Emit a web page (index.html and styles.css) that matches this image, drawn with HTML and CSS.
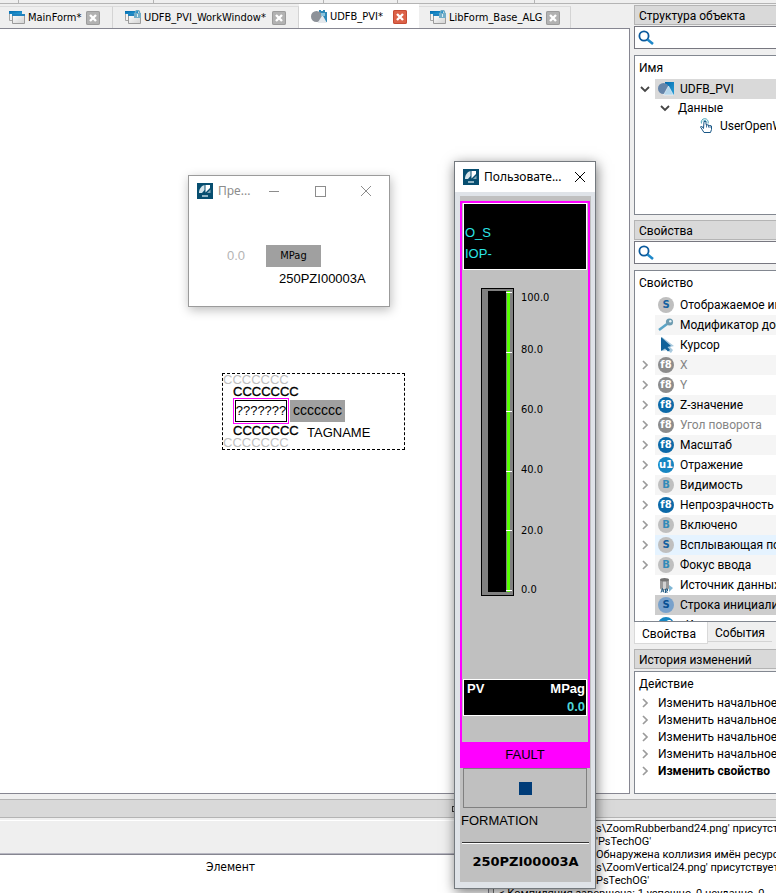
FILE: index.html
```html
<!DOCTYPE html>
<html lang="ru">
<head>
<meta charset="utf-8">
<meta name="viewport" content="width=device-width, initial-scale=1">
<title>UDFB_PVI</title>
<link rel="stylesheet" href="styles.css">
</head>
<body>
<svg class="defs" aria-hidden="true">
  <defs>
    <linearGradient id="blue" x1="0" y1="0" x2="1" y2="1"><stop offset="0" stop-color="#0068ad"/><stop offset="1" stop-color="#2a9fd6"/></linearGradient>
    <linearGradient id="paper" x1="0" y1="0" x2="1" y2="1"><stop offset="0" stop-color="#ffffff"/><stop offset="1" stop-color="#d2d2d2"/></linearGradient>
    <symbol id="form" viewBox="0 0 16 16"><path d="M.5 1.500h12v9H.5z" fill="#f4f4f4" stroke="#a5a5a5"/><path d="M0 1h13v3H0z" fill="url(#blue)"/><path d="M3.500 4.500h12v9h-12z" fill="url(#paper)" stroke="#9b9b9b"/><path d="M3 4h13v2H3z" fill="#2182bd"/></symbol>
    <symbol id="formlock" viewBox="0 0 16 16"><use href="#form"/><path d="M10.500 4V2.500a2 2 0 0 1 4 0V4" fill="none" stroke="#68a8c5" stroke-width="1.500"/><path d="M9 3h7v5H9z" fill="#72adc8"/><path d="M12 4h1v3h-1z" fill="#d9edf5"/></symbol>
    <symbol id="shapes" viewBox="0 0 16 16"><path d="M7 1h9v13H7z" fill="url(#blue)"/><circle cx="5.500" cy="7.500" r="5.500" fill="#6485aa"/><path d="M10.500 5l5 9h-10z" fill="#b3d6ec" stroke="#fff" stroke-width=".5"/></symbol>
    <symbol id="shapeslock" viewBox="0 0 16 16"><path d="M8 1h2v1h2V1h2v2h2v10h-3L8 10z" fill="#2b87b7"/><circle cx="5.500" cy="7.500" r="5.500" fill="#8d9299"/><path d="M11.500 6l4.500 8H6.500z" fill="#e5e9ed"/><path d="M10 4h4v3h-4z" fill="#8ac3dc"/></symbol>
    <symbol id="close" viewBox="0 0 14 14"><path d="M4 4l6 6M10 4l-6 6" stroke="#fff" stroke-width="2.400"/></symbol>
    <symbol id="search" viewBox="0 0 16 16"><circle cx="6" cy="6" r="4.600" fill="none" stroke="#0b5a9d" stroke-width="1.800"/><path d="M9.500 9.500l5.500 4.500" stroke="#1e88c9" stroke-width="2.600"/></symbol>
    <symbol id="down" viewBox="0 0 10 10"><path d="M1 3l4 4 4-4" fill="none" stroke="#454545" stroke-width="1.800"/></symbol>
    <symbol id="right" viewBox="0 0 10 10"><path d="M3 1l4 4-4 4" fill="none" stroke="#9b9b9b" stroke-width="1.700"/></symbol>
    <symbol id="hand" viewBox="0 0 16 16"><path d="M5.500 10.500L3.500 8 2.500 9l3.500 5.500h6.500l1-3V8l-1.500-.5-.5 0-1.500-.5-2-.5v-3h-2z" fill="#fff" stroke="#195786"/><path d="M8.500 6.500v3M10.500 7v2.500M12 7.500v2.500" stroke="#195786" stroke-width=".8"/><path d="M3.500 5.500a3.500 3.500 0 1 1 6.500 0M5 3.500a2 2 0 0 1 3.500 0" fill="none" stroke="#43a2b9"/></symbol>
    <symbol id="key" viewBox="0 0 16 16"><path d="M1 13l8-6" stroke="#5ba5c7" stroke-width="2.600"/><circle cx="11.500" cy="5" r="3.600" fill="#6e9cb1"/><circle cx="12.300" cy="4.200" r="1.200" fill="#e7f2f6"/></symbol>
    <symbol id="cursor" viewBox="0 0 16 16"><path d="M4 0l12 9-4 1 3 3-2 3-4-3-5 1z" fill="#a9c9dd"/><path d="M3 0l10 9-3.500 1 2.500 3-2 1.500-3-3-4 2.500z" fill="#10629a"/></symbol>
    <symbol id="source" viewBox="0 0 16 16"><path d="M2 3v8c0 3 9 3 9 0V3" fill="#9a9a9a"/><path d="M5 4h3v8H5z" fill="#d2d2d2"/><ellipse cx="6.500" cy="2.800" rx="4.500" ry="1.800" fill="#747474"/><path d="M11 8l4 3-4 4z" fill="#80b7d5"/><path d="M3 15.500l1.500-4 1.500 4M4 14h2M7.500 16v-4h2v2h-2l2 2" fill="none" stroke="#245d84"/></symbol>
    <symbol id="app" viewBox="0 0 16 16"><path d="M0 0h16v16H0z" fill="#074e70"/><path d="M2 10C2 6 4 3 7.500 2v5L5 10z" fill="#d6e5eb"/><path d="M8.500 2H13v3L8.500 9.500z" fill="#fff"/><path d="M10 10l3.500-3.500V10z" fill="#83a9ba"/><path d="M5 13h6" stroke="#90b4c4" stroke-width="2"/></symbol>
    <symbol id="winclose" viewBox="0 0 12 12"><path d="M1 1l10 10M11 1L1 11" stroke="currentColor" fill="none"/></symbol>
  </defs>
</svg>

<div class="toolbar"><i></i><i></i><i></i><i></i><i></i></div>

<main class="workspace">
  <section class="editor">
    <nav class="doc-tabs">
      <div class="doc-tab first"><button class="doc"><svg><use href="#form"/></svg>MainForm*</button><button class="x" aria-label="Закрыть"><svg><use href="#close"/></svg></button></div>
      <div class="doc-tab second"><button class="doc"><svg><use href="#formlock"/></svg>UDFB_PVI_WorkWindow*</button><button class="x" aria-label="Закрыть"><svg><use href="#close"/></svg></button></div>
      <div class="doc-tab active"><button class="doc"><svg><use href="#shapeslock"/></svg>UDFB_PVI*</button><button class="x" aria-label="Закрыть"><svg><use href="#close"/></svg></button></div>
      <div class="doc-tab last"><button class="doc"><svg><use href="#formlock"/></svg>LibForm_Base_ALG</button><button class="x" aria-label="Закрыть"><svg><use href="#close"/></svg></button></div>
    </nav>
    <div class="canvas">
      <div class="node">
        <span class="limit far top">CCCCCCC</span>
        <span class="limit top-near">CCCCCCC</span>
        <span class="value"><span>???????</span></span>
        <span class="units">ccccccc</span>
        <span class="limit bottom-near">CCCCCCC</span>
        <span class="limit far bottom">CCCCCCC</span>
        <span class="tagname">TAGNAME</span>
      </div>
    </div>
  </section>

  <aside class="side">
    <section class="panel structure">
      <h2>Структура объекта</h2>
      <label class="search"><svg><use href="#search"/></svg><input type="search" aria-label="Поиск в структуре"></label>
      <div class="box">
        <h3>Имя</h3>
        <ul class="tree">
          <li><svg class="arrow"><use href="#down"/></svg><span class="cell selected"><svg><use href="#shapes"/></svg>UDFB_PVI</span></li>
          <li class="level2"><svg class="arrow"><use href="#down"/></svg>Данные</li>
          <li class="level3"><svg><use href="#hand"/></svg>UserOpenWindow</li>
        </ul>
      </div>
    </section>

    <section class="panel properties">
      <h2>Свойства</h2>
      <label class="search"><svg><use href="#search"/></svg><input type="search" aria-label="Поиск свойства"></label>
      <div class="box">
        <h3>Свойство</h3>
        <ul class="props">
          <li><i class="gap"></i><span class="cell"><b class="type gray">S</b>Отображаемое имя</span></li>
          <li><i class="gap"></i><span class="cell"><svg><use href="#key"/></svg>Модификатор доступа</span></li>
          <li><i class="gap"></i><span class="cell"><svg><use href="#cursor"/></svg>Курсор</span></li>
          <li><svg class="arrow"><use href="#right"/></svg><span class="cell muted"><b class="type off">f8</b>X</span></li>
          <li><svg class="arrow"><use href="#right"/></svg><span class="cell muted"><b class="type off">f8</b>Y</span></li>
          <li><svg class="arrow"><use href="#right"/></svg><span class="cell"><b class="type">f8</b>Z-значение</span></li>
          <li><svg class="arrow"><use href="#right"/></svg><span class="cell muted"><b class="type off">f8</b>Угол поворота</span></li>
          <li><svg class="arrow"><use href="#right"/></svg><span class="cell"><b class="type">f8</b>Масштаб</span></li>
          <li><svg class="arrow"><use href="#right"/></svg><span class="cell"><b class="type light">u1</b>Отражение</span></li>
          <li><svg class="arrow"><use href="#right"/></svg><span class="cell"><b class="type gray bool">B</b>Видимость</span></li>
          <li><svg class="arrow"><use href="#right"/></svg><span class="cell"><b class="type">f8</b>Непрозрачность</span></li>
          <li><svg class="arrow"><use href="#right"/></svg><span class="cell"><b class="type gray bool">B</b>Включено</span></li>
          <li class="hover"><svg class="arrow"><use href="#right"/></svg><span class="cell"><b class="type gray">S</b>Всплывающая подсказка</span></li>
          <li><svg class="arrow"><use href="#right"/></svg><span class="cell"><b class="type gray bool">B</b>Фокус ввода</span></li>
          <li><i class="gap"></i><span class="cell"><svg><use href="#source"/></svg>Источник данных</span></li>
          <li class="current"><i class="gap"></i><span class="cell"><b class="type pick">S</b>Строка инициализации</span></li>
          <li><svg class="arrow"><use href="#right"/></svg><span class="cell"><b class="type light">u1</b>«К</span></li>
        </ul>
      </div>
      <div class="page-tabs"><button class="on">Свойства</button><button>События</button></div>
    </section>

    <section class="panel history">
      <h2>История изменений</h2>
      <div class="box">
        <h3>Действие</h3>
        <ul class="actions">
          <li><svg class="arrow"><use href="#right"/></svg>Изменить начальное</li>
          <li><svg class="arrow"><use href="#right"/></svg>Изменить начальное</li>
          <li><svg class="arrow"><use href="#right"/></svg>Изменить начальное</li>
          <li><svg class="arrow"><use href="#right"/></svg>Изменить начальное</li>
          <li class="now"><svg class="arrow"><use href="#right"/></svg>Изменить свойство</li>
        </ul>
      </div>
    </section>
  </aside>
</main>

<footer class="dock">
  <div class="dock-title"><i></i></div>
  <div class="dock-body">
    <div class="elements">
      <div class="filter"></div>
      <table><thead><tr><th>Элемент</th><th></th></tr></thead></table>
    </div>
    <div class="log">
      <p>s\ZoomRubberband24.png' присутствует</p>
      <p>'PsTechOG'</p>
      <p>Обнаружена коллизия имён ресурсов</p>
      <p>s\ZoomVertical24.png' присутствует</p>
      <p>PsTechOG'</p>
      <p class="result">&lt; Компиляция завершена: 1 успешно, 0 неудачно, 0</p>
    </div>
  </div>
</footer>

<section class="window preview">
  <header><svg class="logo"><use href="#app"/></svg><span>Пре...</span>
    <button aria-label="Свернуть"><i class="min"></i></button><button aria-label="Развернуть"><i class="max"></i></button><button aria-label="Закрыть"><svg><use href="#winclose"/></svg></button>
  </header>
  <div class="preview-body">
    <div class="reading"><span>0.0</span><b>MPag</b></div>
    <p>250PZI00003A</p>
  </div>
</section>

<section class="window faceplate">
  <header><svg class="logo"><use href="#app"/></svg><span>Пользовате...</span><button aria-label="Закрыть"><svg><use href="#winclose"/></svg></button></header>
  <div class="face">
    <div class="alarm-frame">
      <div class="status"><p>O_S</p><p>IOP-</p></div>
      <div class="gauge">
        <div class="bar"><div class="tube"></div><div class="range"><i></i><i></i><i></i><i></i><i></i><i></i></div></div>
        <div class="labels"><span>100.0</span><span>80.0</span><span>60.0</span><span>40.0</span><span>20.0</span><span>0.0</span></div>
      </div>
      <div class="pv"><div><span>PV</span><span>MPag</span></div><p>0.0</p></div>
      <div class="fault">FAULT</div>
    </div>
    <button class="action" aria-label="Действие"><i></i></button>
    <p class="info">FORMATION</p>
    <hr>
    <p class="tag">250PZI00003A</p>
  </div>
</section>
</body>
</html>
```
FILE: styles.css
```css
* { box-sizing: border-box; }
body {
  margin: 0;
  height: 100vh;
  display: flex;
  flex-direction: column;
  position: relative;
  overflow: hidden;
  background: #efefef;
  color: #000;
  font: 12px/16px "Noto Sans", "Open Sans", sans-serif;
}
h2, h3, p, ul { margin: 0; padding: 0; font-size: 12px; font-weight: 400; }
ul { list-style: none; }
button { border: 0; padding: 0; background: none; color: inherit; font: inherit; }
svg { display: block; flex: none; width: 16px; height: 16px; }
.defs { position: absolute; width: 0; height: 0; }

.toolbar { display: flex; flex: none; height: 4px; border-bottom: 1px solid #b4b4b4; }
.toolbar i { border-right: 1px solid #b4b4b4; width: 135px; }
.toolbar i:nth-child(1) { width: 19px; }
.toolbar i:nth-child(3) { width: 170px; }
.toolbar i:nth-child(4) { width: 74px; }
.toolbar i:nth-child(5) { width: 137px; }

.workspace {
  flex: 1;
  min-height: 0;
  display: grid;
  grid-template-columns: minmax(0, 1fr) 142px;
  gap: 4px;
}
.editor { display: flex; flex-direction: column; min-width: 0; }
.canvas { position: relative; flex: 1; background: #fff; border: 1px solid #868691; border-left: 0; }

.doc-tabs { display: flex; align-items: flex-end; height: 24px; font: 11px/18px "DejaVu Sans Condensed", "DejaVu Sans", sans-serif; }
.doc-tab {
  display: flex;
  align-items: center;
  gap: 4px;
  height: 22px;
  padding: 0 12px;
  border-top: 1px solid #dcdcdc;
  border-right: 1px solid #d4d4d4;
  white-space: nowrap;
}
.doc-tab.first { width: 113px; padding-left: 9px; }
.doc-tab.second { width: 186px; }
.doc-tab.active { width: 120px; height: 24px; padding-top: 1px; background: #fff; border: 0; }
.doc-tab.last { width: 152px; padding-left: 11px; }
.doc { display: flex; align-items: center; gap: 3px; padding-top: 1px; }
.x { margin-left: auto; width: 14px; height: 14px; border-radius: 2px; background: #b2b2b2; box-shadow: inset 0 0 0 1px #9c9c9c; }
.x svg { width: 14px; height: 14px; }
.active .x { background: #dc6248; box-shadow: inset 0 0 0 1px #c64b34; }

.node { position: absolute; left: 222px; top: 344px; width: 183px; height: 77px; border: 1px dashed #000; font: 13px/14px "Liberation Sans", Arial, sans-serif; }
.node > span { position: absolute; }
.limit { left: 10px; -webkit-text-stroke: 0.3px; }
.node .far { left: 0; color: #bfbfbf; -webkit-text-stroke: 0; }
.node .top { top: -1px; }
.top-near { top: 11px; }
.bottom-near { top: 50px; }
.node .bottom { top: 62px; }
.value { left: 10px; top: 24px; padding: 1px; border: 1px solid #f0f; }
.value span { display: flex; align-items: center; justify-content: center; width: 52px; height: 22px; border: 1px solid #000; }
.units { left: 67px; top: 26px; width: 55px; height: 22px; background: #a0a0a0; font-size: 14px; line-height: 20px; text-align: center; }
.tagname { left: 84px; top: 52px; }

.side { display: flex; flex-direction: column; min-width: 0; padding-top: 1px; font-family: Roboto, "Noto Sans", sans-serif; white-space: nowrap; }
.panel { display: flex; flex-direction: column; min-height: 0; overflow: hidden; }
.structure { height: 210px; flex: none; }
.properties { height: 424px; flex: none; margin-top: 5px; }
.history { flex: 1; margin-top: 5px; }
h2 { flex: none; height: 20px; padding-left: 4px; line-height: 20px; background: #d9d9d9; border: 1px solid #b4b4b4; border-right: 0; }
.search { flex: none; display: flex; align-items: center; height: 23px; margin: 1px 0 6px; padding-left: 3px; background: #fff; border: 1px solid #777780; border-right: 0; }
.search input { flex: 1; min-width: 0; border: 0; outline: 0; background: none; font: inherit; }
.box { flex: 1; min-height: 0; overflow: hidden; background: #fff; border: 1px solid #828790; border-right: 0; }
.history .box { margin-top: 2px; }
h3 { padding-left: 4px; height: 23px; line-height: 24px; }
.properties h3 { height: 24px; }
.history h3 { height: 22px; }
.tree li, .props li { display: flex; align-items: center; height: 20px; }
.arrow { width: 10px; height: 10px; margin: 0 5px; }
.cell { display: flex; align-items: center; gap: 6px; flex: 1; min-width: 0; height: 20px; padding-left: 3px; }
.gap { flex: none; width: 20px; }
.selected { background: #d9d9d9; }
.tree .level2 { height: 17px; padding-left: 20px; gap: 3px; }
.tree .level3 { padding-left: 63px; gap: 6px; }
.props li:nth-child(even) .cell { background: #f5f5f5; }
.props .hover .cell { background: #e5f3ff; }
.props li.current .cell { background: #cdcdcd; }
.muted { color: #858585; }
.type { display: flex; flex: none; align-items: center; justify-content: center; width: 16px; height: 16px; border-radius: 50%; background: #0b69a8; color: #fff; font: bold 10px/16px "DejaVu Sans", sans-serif; }
.type.light { background: #1686c2; }
.type.off { background: #8c8c8c; }
.type.gray { background: #bfbfbf; color: #1461a0; }
.type.bool { color: #328ab8; }
.type.pick { background: #78a1cb; color: #064f91; }
.page-tabs { display: flex; flex: none; height: 22px; align-items: flex-start; }
.page-tabs button { height: 20px; width: 64px; padding-top: 2px; border-bottom: 1px solid #d4d4d4; }
.page-tabs .on { width: 74px; height: 22px; background: #fff; border: 1px solid #d9d9d9; border-top: 0; padding-right: 4px; }
.actions li { display: flex; align-items: center; height: 17px; }
.actions .arrow { margin-right: 8px; }
.actions .now { font-weight: 700; }

.dock { flex: none; padding-top: 5px; font: 11px/13px "DejaVu Sans Condensed", "DejaVu Sans", sans-serif; }
.dock-title { display: flex; align-items: center; height: 19px; padding-left: 452px; background: #d9d9d9; border: solid #b4b4b4; border-width: 1px 0; }
.dock-title i { width: 7px; height: 6px; border: 1px solid #333; }
.dock-body { display: grid; grid-template-columns: 489px minmax(0, 1fr); gap: 4px; height: 75px; padding-top: 2px; }
.elements { border-top: 1px solid #fff; border-right: 1px solid #868691; }
.filter { height: 33px; border-bottom: 1px solid #b8b8c2; }
.elements table { width: 100%; height: 39px; border-top: 1px solid #868691; border-spacing: 0; background: #fff; table-layout: fixed; }
.elements th { padding: 5px 0 0; font-weight: 400; vertical-align: top; font-size: 12px; line-height: 14px; }
.elements th:first-child { width: 461px; }
.log { overflow: hidden; padding-top: 1px; background: #fff; border: 1px solid #777; border-width: 1px 0 0 1px; font-family: Roboto, sans-serif; white-space: nowrap; }
.log p { padding-left: 102px; font-size: 11px; }
.log .result { padding-left: 5px; }

.window { position: absolute; display: flex; flex-direction: column; background: #fff; border: 1px solid #9b9b9b; box-shadow: 1px 3px 10px #0004; }
.window header { display: flex; flex: none; align-items: center; height: 30px; padding-left: 8px; }
.window header span { flex: 1; padding-left: 5px; }
.preview { left: 188px; top: 175px; width: 202px; height: 132px; }
.preview header { color: #8c8c8c; }
.preview header button { display: grid; place-items: center; width: 46px; height: 30px; }
.window header button svg { width: 12px; height: 12px; }
.min { width: 10px; height: 1px; background: #8c8c8c; }
.max { width: 11px; height: 11px; border: 1px solid #8c8c8c; }
.preview-body { padding-top: 39px; font: 13px/18px "Liberation Sans", Arial, sans-serif; }
.preview-body p { padding: 3px 0 0 90px; font-size: 13px; }
.reading { display: flex; align-items: center; padding-left: 38px; color: #b4b4b4; }
.reading span { width: 39px; }
.reading b { width: 55px; background: #a0a0a0; color: #000; font: 11px/22px "DejaVu Sans Condensed", sans-serif; text-align: center; }

.faceplate { left: 454px; top: 161px; width: 142px; border-color: #74797e; box-shadow: 1px 3px 12px #0008; }
.faceplate header button { display: grid; place-items: center; width: 30px; height: 30px; }
.face { border: solid #dfe3e8; border-width: 4px 4px 6px 5px; padding-top: 5px; background: #c0c0c0; font: 13px/20px "Liberation Sans", Arial, sans-serif; }
.face p { font-size: 13px; }
.alarm-frame { width: 130px; border: 2px solid #f0f; border-bottom: 0; }
.status { margin: 0 1px; height: 67px; padding: 18px 1px 0; border: 1px solid #fff; background: #000; color: #2ce6e6; line-height: 21px; }
.gauge { display: flex; gap: 7px; padding: 18px 0 0 19px; }
.bar { display: flex; gap: 1px; width: 33px; height: 308px; padding: 2px 0 3px 6px; border: 1px solid #000; background: #808080; }
.tube { width: 18px; background: #000; }
.range { display: flex; flex-direction: column; align-items: center; justify-content: space-between; width: 3px; padding: 1px 0; background: #5f0; }
.range i { flex: none; width: 6px; height: 1px; background: #fff; }
.labels { display: grid; grid-template-rows: 52px 60px 60px 61px 59px 16px; padding-top: 2px; height: 308px; font: 11px/16px "DejaVu Sans Condensed", "DejaVu Sans", sans-serif; }
.pv { margin: 83px 1px 26px; height: 37px; padding: 0 1px 0 3px; border: 1px solid #fff; background: #000; color: #fff; font-weight: 700; line-height: 18px; }
.pv div { display: flex; justify-content: space-between; }
.pv p { color: #4fd5d8; text-align: right; font-weight: 700; }
.fault { height: 26px; line-height: 26px; background: #f0f; text-align: center; }
.action { display: grid; place-items: center; width: 124px; height: 40px; margin-left: 3px; border: 1px solid #808080; }
.action i { width: 13px; height: 13px; background: #003c78; }
.info { padding: 3px 0 0 1px; }
.face hr { height: 2px; margin: 11px 2px 8px; border: 0; border-top: 1px solid #333; background: #fff; }
.face .tag { font: bold 13px/20px "DejaVu Sans", sans-serif; text-align: center; padding-bottom: 10px; }
```
